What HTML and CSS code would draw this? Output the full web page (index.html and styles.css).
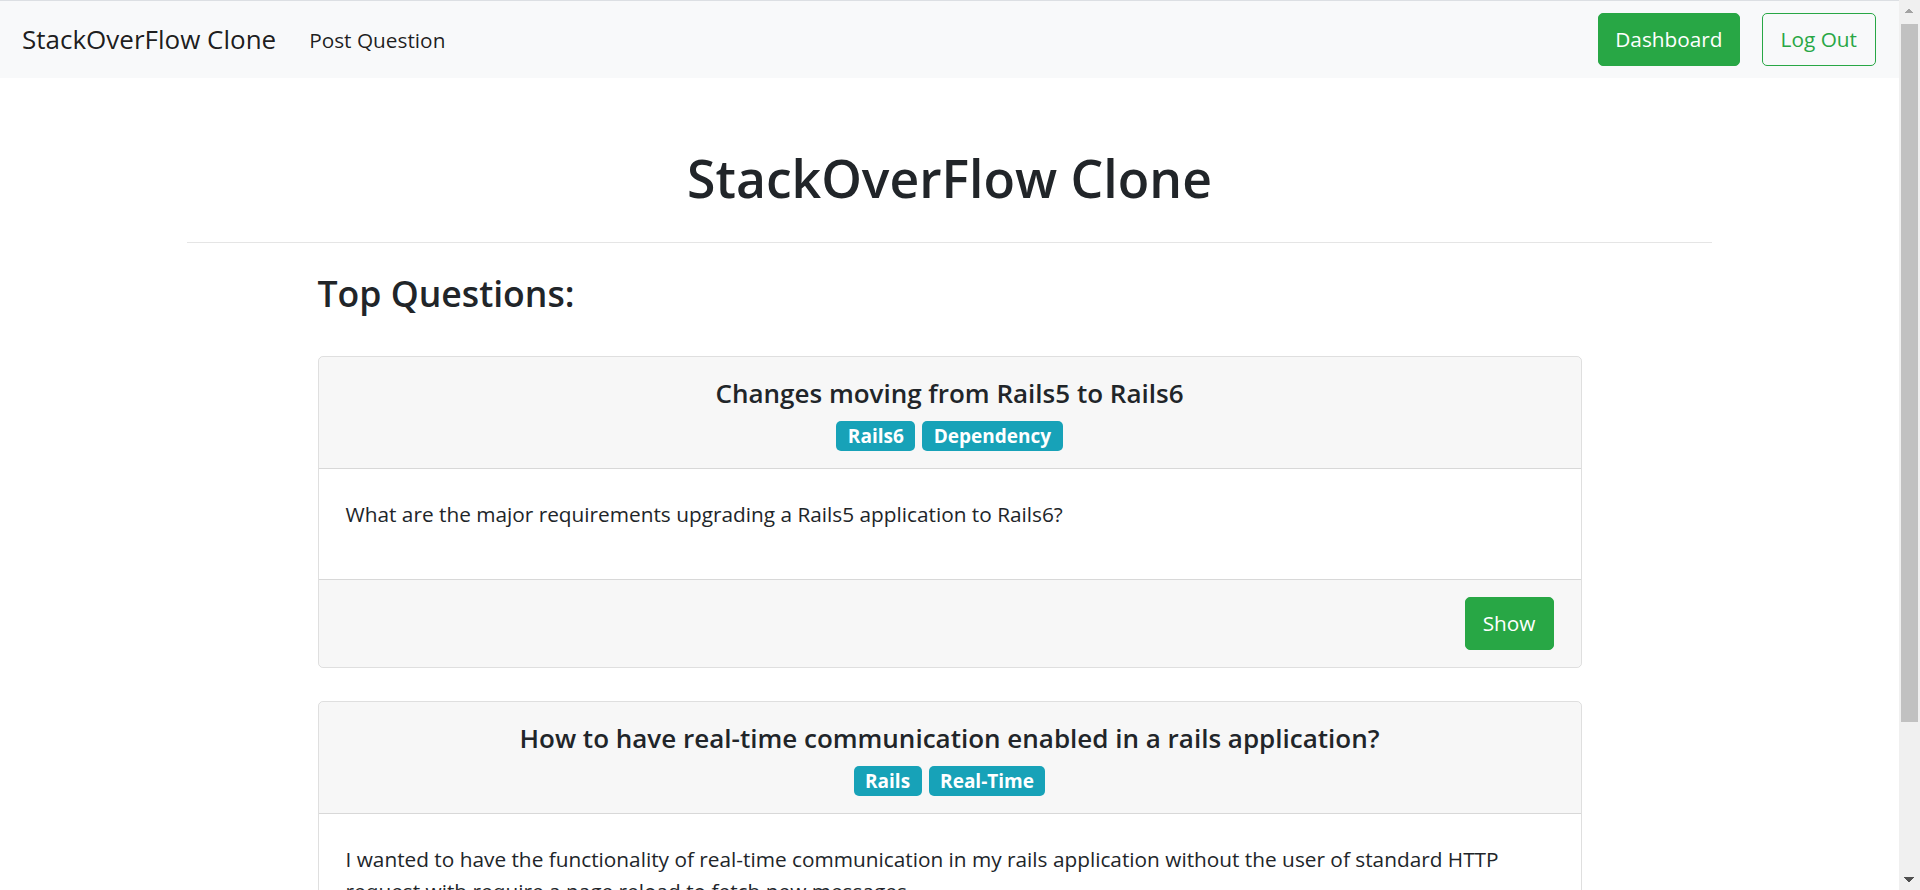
FILE: index.html
```html
<!DOCTYPE html>
<html lang="en">
<head>
<meta charset="utf-8">
<title>StackOverFlow Clone</title>
<link rel="stylesheet" href="styles.css">
</head>
<body>
<div class="viewport">
  <nav class="navbar">
    <a class="brand" href="#">StackOverFlow Clone</a>
    <a class="nav-link" href="#">Post Question</a>
    <div class="nav-right">
      <a class="btn btn-success" href="#">Dashboard</a>
      <a class="btn btn-outline-success" href="#">Log Out</a>
    </div>
  </nav>

  <main class="page">
    <header class="jumbo">
      <h1>StackOverFlow Clone</h1>
    </header>
    <hr class="divider">

    <section class="questions">
      <h3 class="section-title">Top Questions:</h3>

      <article class="card">
        <div class="card-header">
          <h5 class="card-title">Changes moving from Rails5 to Rails6</h5>
          <div class="tags">
            <span class="badge">Rails6</span>
            <span class="badge">Dependency</span>
          </div>
        </div>
        <div class="card-body">
          <p>What are the major requirements upgrading a Rails5 application to Rails6?</p>
        </div>
        <div class="card-footer">
          <a class="btn btn-success" href="#">Show</a>
        </div>
      </article>

      <article class="card">
        <div class="card-header">
          <h5 class="card-title">How to have real-time communication enabled in a rails application?</h5>
          <div class="tags">
            <span class="badge">Rails</span>
            <span class="badge">Real-Time</span>
          </div>
        </div>
        <div class="card-body">
          <p>I wanted to have the functionality of real-time communication in my rails application without the user of standard HTTP request with require a page reload to fetch new messages.</p>
        </div>
        <div class="card-footer">
          <a class="btn btn-success" href="#">Show</a>
        </div>
      </article>
    </section>
  </main>
</div>

<div class="scrollbar" aria-hidden="true">
  <div class="sb-arrow sb-up"></div>
  <div class="sb-track"><div class="sb-thumb"></div></div>
  <div class="sb-arrow sb-down"></div>
</div>
</body>
</html>
```

FILE: styles.css
```css
html {
  scrollbar-width: none;
}
html::-webkit-scrollbar {
  display: none;
  width: 0;
}

body {
  margin: 0;
  font-family: "Open Sans", "Noto Sans", sans-serif;
  font-size: 20.8px;
  line-height: 1.5;
  color: #212529;
  background: #fff;
}

.viewport {
  margin-right: 21px;
}

a {
  text-decoration: none;
}

/* ---------- navbar ---------- */
.navbar {
  display: flex;
  align-items: center;
  height: 78px;
  box-sizing: border-box;
  padding: 0 23px 0 22px;
  background: #f8f9fa;
  border-top: 1px solid #dcdfe3;
}

.brand {
  font-size: 26px;
  line-height: 37px;
  color: rgba(0, 0, 0, 0.9);
  margin-right: 33px;
}

.nav-link {
  font-size: 20.8px;
  line-height: 30px;
  color: rgba(0, 0, 0, 0.88);
}

.nav-right {
  margin-left: auto;
  display: flex;
  gap: 22px;
}

/* ---------- buttons ---------- */
.btn {
  display: inline-block;
  padding: 10px 17px;
  font-size: 20.8px;
  line-height: 31px;
  border: 1px solid transparent;
  border-radius: 5px;
}

.btn-success {
  color: #fff;
  background: #28a745;
  border-color: #28a745;
}

.nav-right .btn-success {
  padding-left: 16px;
  padding-right: 16px;
}

.btn-outline-success {
  padding-left: 18px;
  padding-right: 18px;
  color: #28a745;
  border-color: #28a745;
  background: transparent;
}

/* ---------- header ---------- */
.jumbo h1 {
  margin: 0;
  padding-top: 70px;
  font-size: 51.7px;
  line-height: 60px;
  font-weight: 600;
  text-align: center;
}

.divider {
  width: 1525px;
  margin: 34px auto 0;
  border: 0;
  border-top: 1px solid rgba(0, 0, 0, 0.1);
}

/* ---------- questions ---------- */
.questions {
  width: 1264px;
  margin: 0 auto;
}

.section-title {
  margin: 29px 0 42px;
  font-size: 35.6px;
  line-height: 42px;
  font-weight: 600;
}

.card {
  border: 1px solid rgba(0, 0, 0, 0.125);
  border-radius: 5px;
  margin-bottom: 33px;
  overflow: hidden;
}

.card-header {
  background: rgba(0, 0, 0, 0.03);
  border-bottom: 1px solid rgba(0, 0, 0, 0.125);
  padding: 15px 25px 17px;
  text-align: center;
}

.card-title {
  margin: 6px 0 0;
  font-size: 26px;
  line-height: 30px;
  font-weight: 600;
}

.tags {
  margin-top: 13px;
  display: flex;
  justify-content: center;
  gap: 7px;
}

.badge {
  display: inline-block;
  font-size: 19px;
  font-weight: 700;
  line-height: 20px;
  padding: 5px 11.5px;
  color: #fff;
  background: #17a2b8;
  border-radius: 5px;
}

.card-body {
  padding: 29px 25px 25px 27px;
}

.card-body p {
  margin: 0 0 24px;
  line-height: 32px;
}

.card-footer {
  background: rgba(0, 0, 0, 0.03);
  border-top: 1px solid rgba(0, 0, 0, 0.125);
  padding: 17px 27px;
  display: flex;
  justify-content: flex-end;
}

/* ---------- fake window scrollbar ---------- */
.scrollbar {
  position: fixed;
  top: 0;
  right: 0;
  width: 21px;
  height: 100vh;
  background: #f0f0f0;
  display: flex;
  flex-direction: column;
}

.sb-arrow {
  height: 21px;
  flex: none;
  background-repeat: no-repeat;
  background-size: 5px 5px, 5px 5px;
}

.sb-up {
  background-image:
    linear-gradient(to top left, #a3a3a3 50%, transparent 50%),
    linear-gradient(to top right, #a3a3a3 50%, transparent 50%);
  background-position: 5px 8px, 10px 8px;
}

.sb-down {
  background-image:
    linear-gradient(to bottom left, #505050 50%, transparent 50%),
    linear-gradient(to bottom right, #505050 50%, transparent 50%);
  background-position: 5px 8px, 10px 8px;
}

.sb-track {
  flex: 1;
  padding: 3px 2px 0;
}

.sb-thumb {
  height: 698px;
  background: #c1c1c1;
}
```
